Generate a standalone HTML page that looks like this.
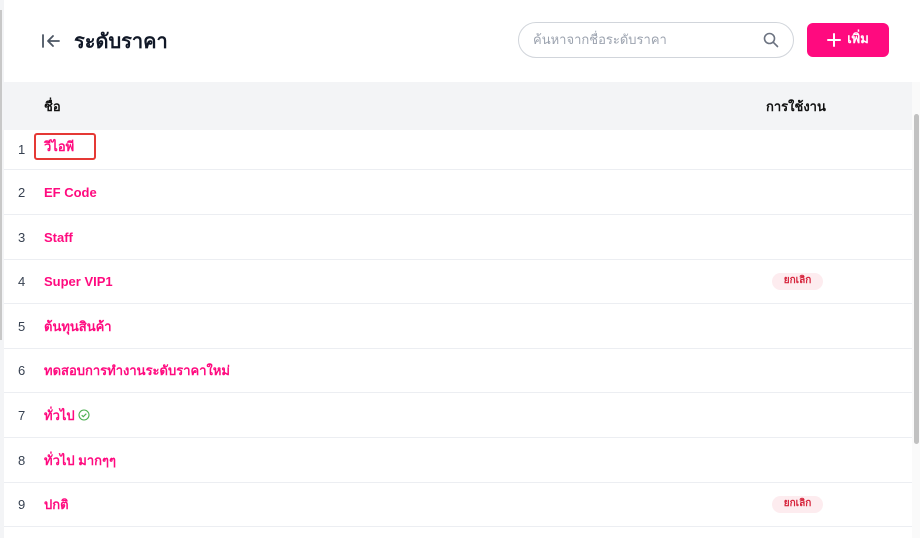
<!DOCTYPE html>
<html><head><meta charset="utf-8"><style>
*{box-sizing:border-box;margin:0;padding:0}
body{width:920px;height:538px;overflow:hidden;background:#fff;font-family:"Liberation Sans","Noto Sans CJK SC",sans-serif;position:relative;color:#1f2937}
.lb{position:absolute;left:0;top:0;width:4px;height:538px;background:#f3f4f6}
.lb2{position:absolute;left:0;top:10px;width:2px;height:330px;background:#c8c8c8}
.sb{position:absolute;left:912px;top:82px;width:8px;height:456px;background:#fafafa}
.thumb{position:absolute;left:914px;top:114px;width:5px;height:330px;background:#c1c1c1;border-radius:3px}
.title{position:absolute;left:74px;top:25px;font-size:20px;font-weight:bold;color:#111827}
.search{position:absolute;left:518px;top:22px;width:276px;height:36px;border:1px solid #d1d5db;border-radius:18px;font-size:13px;color:#9ca3af;padding:6px 14px}
.btn{position:absolute;left:807px;top:23px;width:82px;height:34px;background:#ff0a7f;border-radius:6px;color:#fff;font-size:13px;font-weight:bold;display:flex;align-items:center;justify-content:center;gap:6px}
.btn span{position:relative;top:-2px}
.th{position:absolute;left:4px;top:82px;width:908px;height:48px;background:#f3f4f6;font-size:13px;font-weight:bold;color:#111}
.row{position:absolute;left:4px;width:908px;border-bottom:1px solid #eceef2;font-size:13px}
.n{position:absolute;left:14px;color:#374151}
.nm{position:absolute;left:40px;color:#ff0a7f;font-weight:bold}
.th_{margin-top:-3px}
.tag{position:absolute;left:768px;width:51px;height:17px;background:#fdecef;color:#d6243c;border-radius:9px;font-size:10px;font-weight:bold;text-align:center;line-height:15px}
</style></head><body>
<div class="lb"></div><div class="lb2"></div>
<svg style="position:absolute;left:40px;top:32px" width="22" height="18" viewBox="0 0 22 18"><path d="M3 3v12M19 9H8M13 4L8 9l5 5" stroke="#4b5563" stroke-width="1.8" fill="none" stroke-linecap="round" stroke-linejoin="round"/></svg>
<div class="title">ระดับราคา</div>
<div class="search">ค้นหาจากชื่อระดับราคา
<svg style="position:absolute;right:14px;top:9px" width="16" height="16" viewBox="0 0 16 16"><circle cx="6.5" cy="6.5" r="5" stroke="#6b7280" stroke-width="1.6" fill="none"/><path d="M10.3 10.3L14.5 14.5" stroke="#6b7280" stroke-width="1.6" stroke-linecap="round"/></svg></div>
<div class="btn"><svg width="14" height="14" viewBox="0 0 14 14"><path d="M7 1v12M1 7h12" stroke="#fff" stroke-width="2" stroke-linecap="round"/></svg><span>เพิ่ม</span></div>
<div class="th"><span style="position:absolute;left:40px;top:14px">ชื่อ</span><span style="position:absolute;left:762px;top:14px">การใช้งาน</span></div>
<div class="row" style="top:130px;height:40px"><span class="n" style="top:12px">1</span>
<div style="position:absolute;left:30px;top:3px;width:62px;height:27px;border:2px solid #e53935;border-radius:3px"></div><span class="nm" style="top:6px">วีไอพี</span></div>
<div class="row" style="top:170px;height:45px"><span class="n" style="top:15px">2</span><span class="nm" style="top:15px">EF Code</span></div>
<div class="row" style="top:215px;height:45px"><span class="n" style="top:15px">3</span><span class="nm" style="top:15px">Staff</span></div>
<div class="row" style="top:260px;height:44px"><span class="n" style="top:14px">4</span><span class="nm" style="top:14px">Super VIP1</span><span class="tag" style="top:13px">ยกเลิก</span></div>
<div class="row" style="top:304px;height:45px"><span class="n" style="top:15px">5</span><span class="nm" style="top:12px">ต้นทุนสินค้า</span></div>
<div class="row" style="top:349px;height:44px"><span class="n" style="top:14px">6</span><span class="nm" style="top:11px">ทดสอบการทำงานระดับราคาใหม่</span></div>
<div class="row" style="top:393px;height:45px"><span class="n" style="top:15px">7</span><span class="nm" style="top:12px">ทั่วไป <svg width="12" height="12" viewBox="0 0 12 12" style="vertical-align:-1px"><circle cx="6" cy="6" r="5" stroke="#4caf50" stroke-width="1.1" fill="none"/><path d="M3.7 6.2l1.6 1.5 3-3" stroke="#4caf50" stroke-width="1.1" fill="none"/></svg></span></div>
<div class="row" style="top:438px;height:45px"><span class="n" style="top:15px">8</span><span class="nm" style="top:12px">ทั่วไป มากๆๆ</span></div>
<div class="row" style="top:483px;height:44px"><span class="n" style="top:14px">9</span><span class="nm" style="top:11px">ปกติ</span><span class="tag" style="top:13px">ยกเลิก</span></div>
<div class="sb"></div><div class="thumb"></div>
</body></html>
